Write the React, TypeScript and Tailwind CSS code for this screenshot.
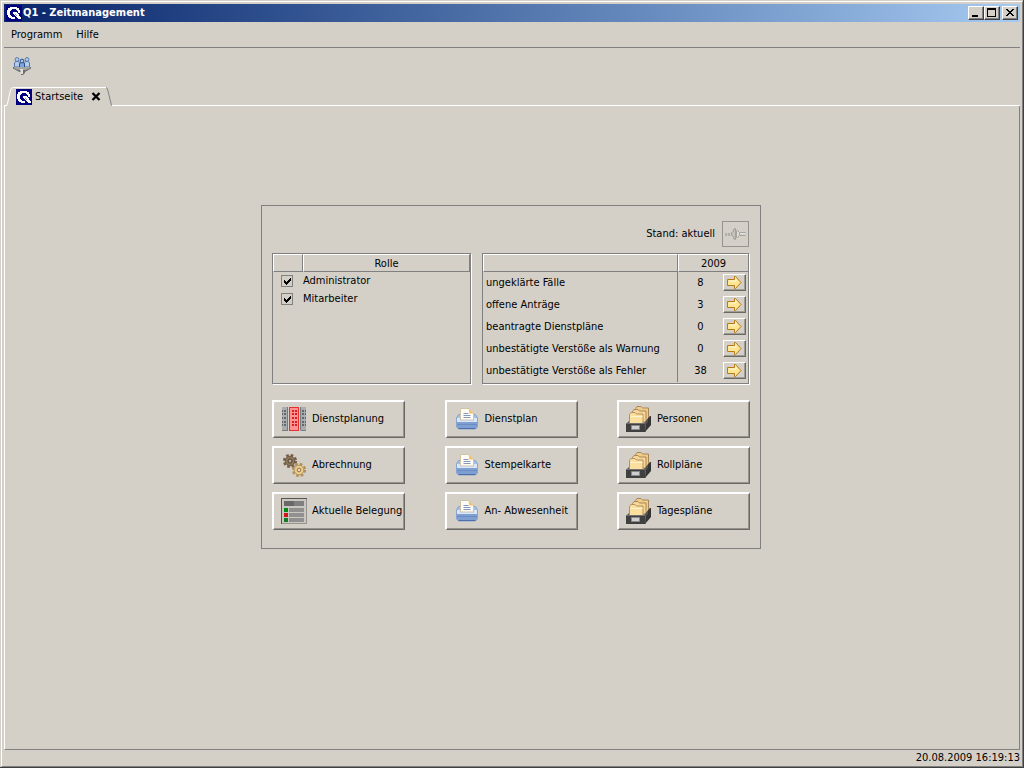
import { useState, type ReactNode } from 'react';

const stats = [
  { label: 'ungeklärte Fälle', count: 8 },
  { label: 'offene Anträge', count: 3 },
  { label: 'beantragte Dienstpläne', count: 0 },
  { label: 'unbestätigte Verstöße als Warnung', count: 0 },
  { label: 'unbestätigte Verstöße als Fehler', count: 38 }
];

const actions = [
  { label: 'Dienstplanung', icon: <PlanningIcon /> },
  { label: 'Dienstplan', icon: <PrinterIcon /> },
  { label: 'Personen', icon: <FolderIcon /> },
  { label: 'Abrechnung', icon: <GearsIcon /> },
  { label: 'Stempelkarte', icon: <PrinterIcon /> },
  { label: 'Rollpläne', icon: <FolderIcon /> },
  { label: 'Aktuelle Belegung', icon: <ListIcon /> },
  { label: 'An- Abwesenheit', icon: <PrinterIcon /> },
  { label: 'Tagespläne', icon: <FolderIcon /> }
];

const headCell = 'h-[18px] border-t border-l border-t-white border-l-white border-b border-b-[#808080] p-0 pt-0.5 text-center font-normal';

function Logo() {
  return (
    <svg viewBox="0 0 16 16" className="size-4 shrink-0" shapeRendering="crispEdges" aria-hidden="true">
      <rect width="16" height="16" fill="#000080" />
      <path d="M4 2h7v1h2v2h1v3h-2V6h-1V5h-1V4H6v1H5v1H4v4h1v1h1v1h3v2H5v-1H3v-1H2v-2H1V5h1V3h2z" fill="#fff" />
      <path d="M7 7h4v1h1v1h1v2h1v1h1v2h-3v-1h-1v-1h-1v-1H9v-1H8V9H7z" fill="#fff" />
      <path d="M9 9h1v1h1v1h-1v-1H9z" fill="#8a8ab8" />
    </svg>
  );
}

function FilterIcon() {
  return (
    <svg viewBox="0 0 18 18" className="size-[18px]" aria-hidden="true">
      <g fill="#b4cdee" stroke="#5578aa">
        <path d="M1.5 10V6L2.5 4.5h3L6.5 6v4z" />
        <path d="M11.5 10V6l1-1.5h3l1 1.500v4z" />
        <circle cx="4" cy="2.500" r="1.900" />
        <circle cx="14" cy="2.500" r="1.900" />
      </g>
      <path d="M6.500 11V7L7.500 5.500h3L11.500 7v4z" fill="#7fa5da" stroke="#2c4f86" />
      <circle cx="9" cy="4" r="1.900" fill="#a9c6ea" stroke="#2c4f86" />
      <path d="M0 10h18v1.500L12 15v1l-2 2H8v-3H6.500L0 11.500z" fill="#6d6d6b" />
      <path d="M1 10h16v1l-4 2H5l-4-2z" fill="#a5a5a2" />
      <path d="M7 12h3v5H8z" fill="#dededb" />
    </svg>
  );
}

function PlugIcon() {
  return (
    <svg viewBox="0 0 21 12" className="h-3 w-[21px]" aria-hidden="true">
      <path d="M0 5.500h6M0 7.500h6" stroke="#a9a7a2" strokeDasharray="2 1" />
      <path d="M0 6.500h6" stroke="#bdbbb6" />
      <path d="M6.500 4.500l2-1v-2h1v-1h1v11h-1v-1h-1v-2l-2-1z" fill="#c4c2bd" stroke="#a5a39e" />
      <path d="M11.500 2.500h1l2 2v3l-2 2h-1z" fill="#dedcd7" stroke="#a5a39e" />
      <path d="M15 4.500h5.500M15 7.500h5.500" stroke="#a5a39e" />
      <path d="M15 5.500h5" stroke="#e6e4df" />
    </svg>
  );
}

function ArrowIcon() {
  return (
    <svg viewBox="0 0 15 13" className="h-[13px] w-[15px]" aria-hidden="true">
      <path d="M.5 3.500h7v-3h1l5.500 6-5.500 6h-1v-3h-7z" fill="#ffe694" stroke="#b97a14" />
      <path d="M2 5h7V2.500" fill="none" stroke="#fff7d2" />
    </svg>
  );
}

function PlanningIcon() {
  return (
    <svg viewBox="0 0 26 26" className="size-[26px]" shapeRendering="crispEdges" aria-hidden="true">
      <path d="M1 1h6v24H1zM19 1h6v24h-6z" fill="#a8adb0" />
      <path d="M6 1h1v24H1v-1h5zM19 1h1v24h5v-1h-6z" fill="#777b7e" />
      <rect x="8" y="1" width="10" height="24" fill="#ff9292" />
      <path d="M8 1h10v24H8zM9 2v22h8V2z" fill="#e83030" fillRule="evenodd" />
      {[4, 7, 11, 15, 18].map((y) => (
        <g key={y}>
          <path d={`M1 ${y}h1v2h-1zM3 ${y}h2v2h-2zM21 ${y}h2v2h-2zM24 ${y}h1v2h-1z`} fill="#63686b" />
          <path d={`M11 ${y}h2v2h-2zM14 ${y}h2v2h-2z`} fill="#d82020" />
        </g>
      ))}
    </svg>
  );
}

function GearsIcon() {
  return (
    <svg viewBox="0 0 26 26" className="size-[26px]" aria-hidden="true">
      <circle cx="9" cy="9" r="6" fill="none" stroke="#77604a" strokeWidth="2.200" strokeDasharray="2.700 2.010" />
      <circle cx="9" cy="9" r="4.800" fill="#8f7759" stroke="#6b553f" />
      <circle cx="9" cy="9" r="2" fill="#b5aa98" stroke="#54402e" />
      <circle cx="18" cy="18" r="6" fill="none" stroke="#b18d58" strokeWidth="2.200" strokeDasharray="2.700 2.010" />
      <circle cx="18" cy="18" r="4.800" fill="#e9cc90" stroke="#b8925a" />
      <circle cx="18" cy="18" r="1.800" fill="#e8e0d0" stroke="#9a713b" />
    </svg>
  );
}

function ListIcon() {
  return (
    <svg viewBox="0 0 26 26" className="size-[26px]" shapeRendering="crispEdges" aria-hidden="true">
      <path d="M0 0h26v26H0z" fill="#96958f" />
      <path d="M1 1h24v24H1z" fill="#c9c7bf" />
      <path d="M0 0h26v1H1v25H0z" fill="#555" />
      <path d="M3 3h20v5H3z" fill="#808080" />
      <path d="M3 3h10v5H3z" fill="#686868" />
      <path d="M8 10h15v4H8zM8 15h15v4H8zM8 20h15v4H8z" fill="#909090" />
      <path d="M3 10h4v4H3z" fill="#008a10" />
      <path d="M3 15h4v4H3z" fill="#d01515" />
      <path d="M3 20h4v4H3z" fill="#167a20" />
    </svg>
  );
}

function PrinterIcon() {
  return (
    <svg viewBox="0 0 26 26" className="size-[26px]" aria-hidden="true">
      <path d="M4.500 8.500h17l2 3.500v9l-2 2h-17l-2-2v-9z" fill="#a5bfe3" stroke="#86a5d2" />
      <path d="M6.500 14V2.500H15L19.500 7v7z" fill="#fdfcf7" stroke="#cfc3a8" />
      <path d="M14.500 2.500l5 5h-4z" fill="#f3bd62" />
      <path d="M9.500 7.500h5M9.500 9.500h7M9.500 11.500h7" stroke="#8796bb" />
      <path d="M3 12h3v2.500h14V12h3v4H3z" fill="#dbe7f6" />
      <path d="M3 16h20v5l-1.500 1.500h-17L3 21z" fill="#7f9fd1" />
      <path d="M3 18.500h20" stroke="#6a8dc6" />
      <path d="M4.500 22.500h17" stroke="#4c6fa9" />
    </svg>
  );
}

function FolderIcon() {
  return (
    <svg viewBox="0 0 26 26" className="size-[26px]" aria-hidden="true">
      <path d="M9.500 10V2.500l1.500-2h4L16.500 2H22.500v10l-3 5h-10z" fill="#efcd88" stroke="#a9855a" />
      <path d="M6.500 14V5.500L8 3.500h4L13.500 5H20v11H6.500z" fill="#f6d797" stroke="#a9855a" />
      <path d="M3.500 17.500v-9l1.500-2h4L10.500 8H17v9.500z" fill="#fbdf9f" stroke="#b4905f" />
      <path d="M4.500 10.500h12" stroke="#fff3cf" />
      <path d="M20 15l4-5h1v9l-6 7z" fill="#353535" />
      <path d="M1 17l2-2v2h15l4-4v3l-3 3H1z" fill="#555" />
      <path d="M0 17h19.500v9H0z" fill="#404040" />
      <path d="M0 17.500h19.500" stroke="#707070" />
      <path d="M5.500 19.500h8v4h-8z" fill="#cfcfcf" stroke="#8a8a8a" />
    </svg>
  );
}

function CaptionButton({ label, children }: { label: string; children: ReactNode }) {
  return (
    <button
      aria-label={label}
      className="h-[14px] w-4 border border-t-white border-l-white border-r-[#404040] border-b-[#404040] bg-[#d4d0c8] shadow-[inset_-1px_-1px_0_#808080]"
    >
      <svg viewBox="0 0 14 12" className="h-3 w-3.5" shapeRendering="crispEdges" aria-hidden="true">
        {children}
      </svg>
    </button>
  );
}

function TitleBar() {
  return (
    <header className="flex h-[18px] items-center bg-linear-to-r from-[#0a246a] to-[#a6caf0] px-0.5 text-white">
      <Logo />
      <h1 className="flex-1 pl-px font-bold">Q1 - Zeitmanagement</h1>
      <CaptionButton label="Minimieren">
        <path d="M3 8h6v2H3z" />
      </CaptionButton>
      <CaptionButton label="Maximieren">
        <path d="M2 1h9v9H2zM3 3v6h7V3z" fillRule="evenodd" />
      </CaptionButton>
      <div className="flex pl-0.5">
        <CaptionButton label="Schließen">
          <path d="M3 2h2v1h1v1h2V3h1V2h2v1h-1v1H9v1H8v1h1v1h1v1h1v1H9V8H8V7H6v1H5v1H3V8h1V7h1V6h1V5H5V4H4V3H3z" />
        </CaptionButton>
      </div>
    </header>
  );
}

function RoleTable() {
  const [roles, setRoles] = useState([
    { name: 'Administrator', active: true },
    { name: 'Mitarbeiter', active: true }
  ]);

  const toggle = (name: string) =>
    setRoles(roles.map((r) => (r.name === name ? { ...r, active: !r.active } : r)));

  return (
    <div className="w-[199px] border border-[#808080] shadow-[1px_1px_0_#fff]">
      <table className="w-full table-fixed border-separate border-spacing-0">
        <thead>
          <tr>
            <th className={`${headCell} w-[30px] border-r border-r-[#808080]`} />
            <th className={`${headCell} border-r border-r-[#808080]`}>Rolle</th>
          </tr>
        </thead>
        <tbody>
          {roles.map((role) => (
            <tr key={role.name}>
              <td className="h-[18px] p-0 pl-2">
                <span className="relative block size-3">
                  <input
                    id={role.name}
                    type="checkbox"
                    checked={role.active}
                    onChange={() => toggle(role.name)}
                    className="peer block size-3 appearance-none border border-[#808080]"
                  />
                  <svg
                    viewBox="0 0 12 12"
                    className="pointer-events-none absolute inset-0 hidden size-3 peer-checked:block"
                    shapeRendering="crispEdges"
                    aria-hidden="true"
                  >
                    <path d="M3 5h1v1h1v1h1V6h1V5h1V4h1V3h1v3H9v1H8v1H7v1H6v1H5V9H4V8H3z" />
                  </svg>
                </span>
              </td>
              <td className="h-[18px] p-0">
                <label htmlFor={role.name}>{role.name}</label>
              </td>
            </tr>
          ))}
        </tbody>
      </table>
    </div>
  );
}

function StatsTable() {
  return (
    <div className="w-[267px] border border-[#808080] shadow-[1px_1px_0_#fff]">
      <table className="w-full table-fixed border-separate border-spacing-0">
        <colgroup>
          <col className="w-[195px]" />
          <col className="w-[45px]" />
          <col />
        </colgroup>
        <thead>
          <tr>
            <th className={`${headCell} border-r border-r-[#808080]`} />
            <th colSpan={2} className={headCell}>2009</th>
          </tr>
        </thead>
        <tbody>
          {stats.map((row) => (
            <tr key={row.label}>
              <td className="h-[22px] border-r border-[#808080] p-0 pl-[3px] whitespace-nowrap">{row.label}</td>
              <td className="p-0 text-center">{row.count}</td>
              <td className="p-0 pb-px">
                <button
                  aria-label={`${row.label} anzeigen`}
                  className="flex h-[17px] w-[23px] items-center justify-center border border-t-white border-l-white border-r-[#6b6963] border-b-[#6b6963] shadow-[inset_-1px_-1px_0_#a09d96]"
                >
                  <ArrowIcon />
                </button>
              </td>
            </tr>
          ))}
        </tbody>
      </table>
    </div>
  );
}

export default function App() {
  return (
    <div className="flex min-h-screen flex-col border-r border-b border-[#404040] bg-[#d4d0c8] pt-px pl-px font-['DejaVu_Sans_Condensed','DejaVu_Sans',sans-serif] text-[11px] leading-[14px] text-black">
      <div className="flex flex-1 flex-col border border-t-white border-l-white border-r-[#808080] border-b-[#808080] px-0.5 pt-0.5">
        <TitleBar />
        <nav className="flex h-[26px] items-center gap-3.5 border-b border-[#808080] px-[7px] pt-px">
          <button>Programm</button>
          <button>Hilfe</button>
        </nav>
        <div className="flex h-[39px] items-center px-[9px] pb-1">
          <button aria-label="Personenfilter">
            <FilterIcon />
          </button>
        </div>

        {/* the tab outline carries the white edge along the top of the page area */}
        <div className="flex h-[19px]">
          <div className="relative flex w-[108px] items-center pl-3">
            <svg viewBox="0 0 108 19" className="absolute inset-0 h-[19px] w-[108px]" aria-hidden="true">
              <path d="M0 18.500h3L6.500 3Q7 .5 9.500 .5H102" fill="none" stroke="#fff" />
              <path d="M102 .5Q103.500 1 104 4l3.500 14.500" fill="none" stroke="#808080" />
            </svg>
            <button className="relative flex items-center gap-[3px]">
              <Logo />
              Startseite
            </button>
            <button aria-label="Tab schließen" className="relative pl-2">
              <svg viewBox="0 0 10 9" className="h-[9px] w-2.5" aria-hidden="true">
                <path d="M1.500 1l7 7M8.500 1l-7 7" stroke="#000" strokeWidth="2.300" />
              </svg>
            </button>
          </div>
          <div className="flex-1 border-b border-white" />
        </div>

        <main className="flex-1 border-r border-b border-l border-r-[#808080] border-b-[#808080] border-l-white pt-[99px] pr-0.5">
          <section className="mx-auto w-[500px] border border-[#808080] px-2.5 pt-[15px] pb-[18px]">
            <div className="flex items-center justify-end gap-[7px] pr-px">
              <span>Stand: aktuell</span>
              <button
                disabled
                aria-label="Verbindung"
                className="flex h-[26px] w-[27px] items-center justify-center border border-[#97948d]"
              >
                <PlugIcon />
              </button>
            </div>

            <div className="mt-1.5 flex h-[131px] justify-between pr-px">
              <RoleTable />
              <StatsTable />
            </div>

            <div className="mt-4 grid grid-cols-[repeat(3,133px)] justify-between gap-y-2">
              {actions.map((action) => (
                <button
                  key={action.label}
                  className="flex h-[38px] items-center gap-[5px] border-t-2 border-r border-b border-l-2 border-t-white border-l-white border-r-[#6b6963] border-b-[#6b6963] pb-px pl-[7px] whitespace-nowrap shadow-[inset_-1px_-1px_0_#96938c]"
                >
                  {action.icon}
                  {action.label}
                </button>
              ))}
            </div>
          </section>
        </main>

        <footer className="flex h-4 items-center justify-end">
          <time dateTime="2009-08-20T16:19:13">20.08.2009 16:19:13</time>
        </footer>
      </div>
    </div>
  );
}
